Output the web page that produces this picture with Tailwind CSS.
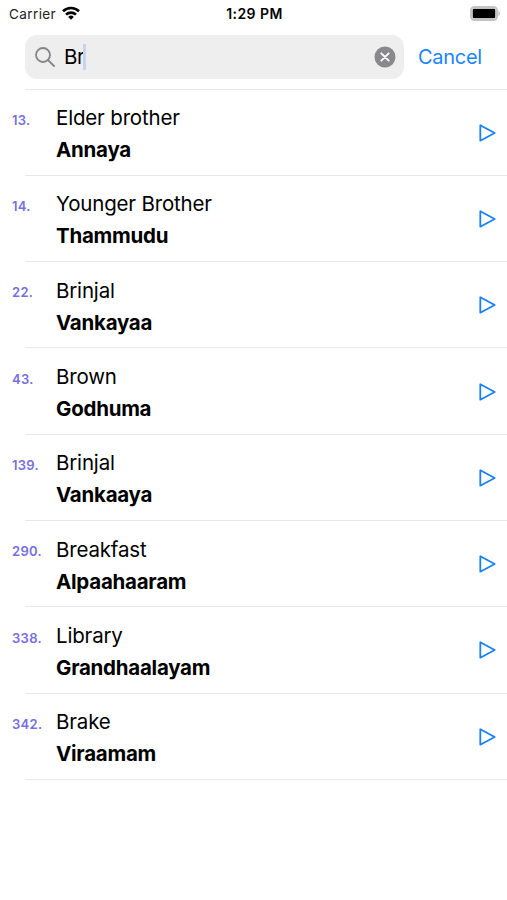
<!DOCTYPE html>
<html lang="en">
<head>
  <meta charset="UTF-8" />
  <meta name="viewport" content="width=device-width, initial-scale=1" />
  <title>Word Search</title>
  <script src="https://cdn.jsdelivr.net/npm/@tailwindcss/browser@4"></script>
</head>
<body class="bg-white text-black font-['Inter',sans-serif] h-[900px] overflow-hidden">
  <header>
    <div class="grid grid-cols-3 items-center h-7 pl-[9px] pr-[7px] text-[13.5px]">
      <div class="flex items-center gap-1.5">
        <span class="tracking-[0.4px] text-[#222222]">Carrier</span>
        <svg class="w-[18px] h-[14px] mb-[3px]" viewBox="0 0 18 14" fill="none" stroke="black" stroke-width="2.6">
          <path d="M1 5.2a11.5 11.5 0 0 1 16 0" />
          <path d="M4 8.6a7.2 7.2 0 0 1 10 0" />
          <path d="M9 13.8 6.2 10.9a4 4 0 0 1 5.6 0z" fill="black" stroke="none" />
        </svg>
      </div>
      <div class="text-center text-sm font-semibold tracking-[0.45px]">1:29 PM</div>
      <svg class="justify-self-end w-[30px] h-[15px] mb-[2px]" viewBox="0 0 30 15">
        <rect x="1" y="1" width="26" height="13" rx="3.5" fill="none" stroke="#c4c4c4" stroke-width="2" />
        <rect x="2.7" y="2.7" width="22.6" height="9.6" rx="1.2" />
        <path d="M28.5 5v5c1.8-.8 1.8-4.2 0-5z" fill="#b4b4b4" />
      </svg>
    </div>
    <div class="flex items-center h-[60.5px] pl-[25px] pb-[3px]">
      <label class="flex items-center w-[379px] h-11 pl-2.5 pr-2 rounded-xl bg-[#eeeeee]">
        <svg class="w-5 h-5" viewBox="0 0 20 20" fill="none" stroke="#858588" stroke-width="1.8" stroke-linecap="round">
          <circle cx="8" cy="8" r="7" />
          <path d="m13 13 6 6" />
        </svg>
        <span class="ml-[9px] pt-0.5 text-[20.5px] tracking-[-0.4px]">Br</span>
        <span class="-ml-px w-[2.5px] h-[26px] bg-[#c9d3ee]"></span>
        <svg class="ml-auto w-[22px] h-[22px]" viewBox="0 0 22 22">
          <circle cx="11" cy="11" r="10.5" fill="#89898c" />
          <path d="m7.3 7.3 7.4 7.4m0-7.4-7.4 7.4" stroke="white" stroke-width="1.8" stroke-linecap="round" />
        </svg>
      </label>
      <button class="ml-3.5 text-xl tracking-[-0.3px] text-[#1a84ff]">Cancel</button>
    </div>
  </header>
  <main id="words"></main>

  <script>
    const words = [
      [13, 'Elder brother', 'Annaya'],
      [14, 'Younger Brother', 'Thammudu'],
      [22, 'Brinjal', 'Vankayaa'],
      [43, 'Brown', 'Godhuma'],
      [139, 'Brinjal', 'Vankaaya'],
      [290, 'Breakfast', 'Alpaahaaram'],
      [338, 'Library', 'Grandhaalayam'],
      [342, 'Brake', 'Viraamam'],
    ];

    document.getElementById('words').innerHTML = '<div class="ml-[25px] h-px bg-[#e8e8e9]"></div>' + words.map(([number, english, telugu]) => `
      <div class="flex h-[85.3px] pl-3 pr-[11px]">
        <div class="w-11 pt-[20.4px] text-[13px] leading-5 font-semibold tracking-[0.3px] text-[#776ee0]">${number}.</div>
        <div class="grow pt-[12.6px] text-[20.5px] leading-8">
          <div class="tracking-[-0.17px]">${english}</div>
          <div class="font-bold tracking-[-0.25px]">${telugu}</div>
        </div>
        <svg class="self-center mt-px w-[17px] h-[18px]" viewBox="0 0 17 18" fill="none" stroke="#1a80f5" stroke-width="1.8" stroke-linejoin="round">
          <path d="M1.3 1.3v15.4L15.7 9z" />
        </svg>
      </div>
      <div class="ml-[25px] h-px bg-[#e8e8e9]"></div>`).join('');
  </script>
</body>
</html>
